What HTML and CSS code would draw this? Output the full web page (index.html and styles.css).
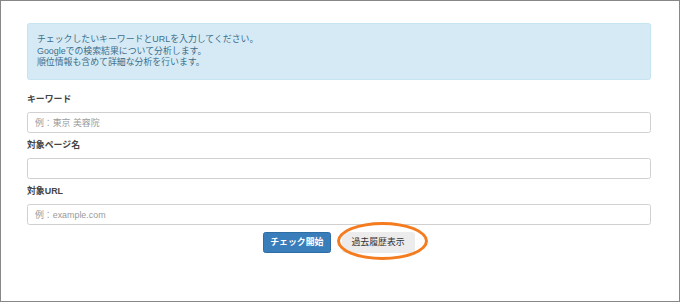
FILE: index.html
```html
<!DOCTYPE html>
<html lang="ja">
<head>
  <meta charset="UTF-8" />
  <meta name="viewport" content="width=device-width, initial-scale=1.0" />
  <title>キーワードチェック</title>
  <link rel="stylesheet" href="styles.css">
</head>
<body>
  <div class="frame">
    <div class="alert">
      チェックしたいキーワードとURLを入力してください。<br>
      Googleでの検索結果について分析します。<br>
      順位情報も含めて詳細な分析を行います。
    </div>

    <form class="check-form" onsubmit="return false;">
      <label for="keyword">キーワード</label>
      <input type="text" id="keyword" placeholder="例：東京 美容院" />

      <label for="pageName">対象ページ名</label>
      <input type="text" id="pageName" />

      <label for="targetUrl">対象URL</label>
      <input type="text" id="targetUrl" placeholder="例：example.com" />

      <div class="actions">
        <button type="submit" class="btn btn-primary">チェック開始</button>
        <span class="history-wrap">
          <button type="button" class="btn btn-default">過去履歴表示</button>
          <span class="mark"></span>
        </span>
      </div>
    </form>
  </div>
</body>
</html>
```

FILE: styles.css
```css
* {
  box-sizing: border-box;
}

body {
  margin: 0;
  padding: 0;
  background: #fff;
  font-family: 'Liberation Sans', 'Noto Sans CJK JP', sans-serif;
  font-size: 8.9px;
  color: #333;
}

.frame {
  width: 680px;
  height: 302px;
  border: 1px solid #878787;
  padding: 22px 28px 0 26px;
}

.alert {
  background: #d6eaf5;
  border: 1px solid #c5e5f0;
  border-radius: 2.5px;
  color: #3b6f8c;
  padding: 10px 9px;
  line-height: 11.7px;
  margin-bottom: 13px;
}

.check-form {
  display: flex;
  flex-direction: column;
}

label {
  display: block;
  font-weight: bold;
  color: #444;
  height: 12px;
  line-height: 12px;
  margin-bottom: 7px;
}

input {
  display: block;
  width: 100%;
  height: 21px;
  margin: 0 0 6px;
  padding: 0 7px;
  border: 1px solid #d0d0d0;
  border-radius: 2.5px;
  font-family: inherit;
  font-size: 8.9px;
  color: #555;
  outline: none;
}

input::placeholder {
  color: #9a9a9a;
}

.actions {
  display: flex;
  justify-content: center;
  gap: 11px;
  margin-top: 1px;
}

.btn {
  height: 21px;
  border-radius: 2.5px;
  font-family: inherit;
  font-size: 8.9px;
  line-height: 19px;
  cursor: pointer;
}

.btn-primary {
  background: #3a7dbb;
  border: 1px solid #2f6da5;
  color: #fff;
  font-weight: bold;
  padding: 0 6px;
}

.btn-default {
  background: #ececec;
  border: 1px solid #ececec;
  color: #333;
  padding: 0 9px;
}

.history-wrap {
  position: relative;
  display: inline-block;
}

.mark {
  position: absolute;
  left: -5px;
  top: -10px;
  width: 91px;
  height: 38px;
  border: 3px solid #f47c1e;
  border-radius: 50%;
  pointer-events: none;
}
```
